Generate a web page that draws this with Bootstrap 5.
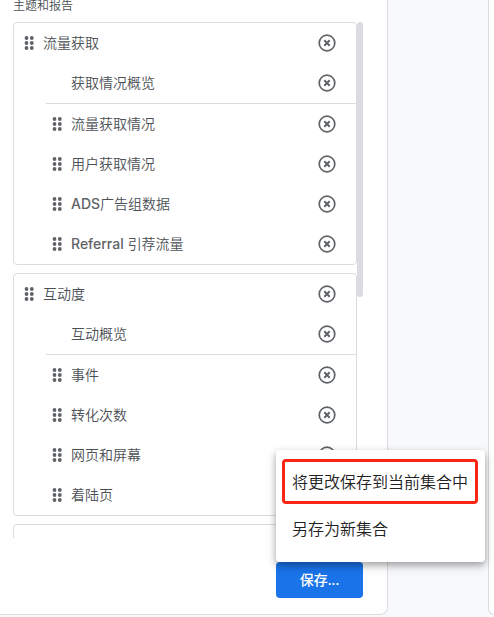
<!DOCTYPE html>
<html lang="zh-CN">
<head>
<meta charset="utf-8">
<meta name="viewport" content="width=device-width, initial-scale=1">
<title>主题和报告</title>
<link href="https://cdn.jsdelivr.net/npm/bootstrap@5.3.0/dist/css/bootstrap.min.css" rel="stylesheet">
<style>
body { background: #f8f9fb; color: #4c5055; font-family: Inter, "Noto Sans CJK SC", sans-serif; font-size: 14px; font-weight: 350; line-height: 20px; overflow: hidden; }
.workspace { gap: 100px; }
.editor { min-width: 0; padding: 0 24px 16px 13px; border: solid #dadce0; border-width: 0 1px 1px 0; border-bottom-right-radius: 8px; }
.preview { width: 6px; border: solid #dadce0; border-width: 0 0 1px 1px; border-bottom-left-radius: 8px; }
.section-label { font-size: 12px; line-height: 12px; font-weight: 350; margin-bottom: 10px; }
.topic-scroll { height: 516px; margin-bottom: 24px; }
.topic { border: 1px solid #dadce0; border-radius: 4px; background: #fff; }
.topic-row { height: 40px; padding: 0 19px 0 9px; }
.topic-items { margin: 0; padding: 0; margin-left: 32px; list-style: none; }
.topic-items .topic-row { padding-left: 5px; }
.topic-items .overview { padding-left: 25px; height: 41px; border-bottom: 1px solid #dadce0; }
.topic-title { font-size: 14px; line-height: 20px; font-weight: 350; }
.latin { font-weight: 500; color: #5f6368; }
.handle { width: 12px; height: 20px; fill: #5f6368; }
.remove { width: 20px; height: 20px; color: #5f6368; }
.remove svg { width: 20px; height: 20px; }
.thumb { width: 6px; height: 275px; background: #dadce0; border-radius: 3px; }
.btn-save { width: 87px; height: 36px; padding: 0; background: #1a73e8; color: #fff; border: 0; border-radius: 4px; font-family: Roboto, "Noto Sans CJK SC", sans-serif; font-size: 14px; font-weight: 500; }
.btn-save:hover, .btn-save.show { background: #1a73e8 !important; color: #fff !important; }
.save-menu { left: 0; bottom: 100%; width: 209px; min-width: 0; padding: 9px 6px 8px; border: 0; border-radius: 4px; box-shadow: 0 3px 6px rgba(0,0,0,.25), 0 4px 12px rgba(0,0,0,.16); }
.save-menu .dropdown-item { height: 46px; padding: 0 10px; color: #212121; font-size: 16px; font-weight: 350; line-height: 24px; }
.save-menu .highlighted { width: 196px; height: 45px; padding: 0 7px; border: 3px solid #fb2616; border-radius: 4px; margin-bottom: 2px; }
.save-menu { padding-bottom: 10px; }
</style>
</head>
<body>
<svg class="d-none" aria-hidden="true">
  <symbol id="dots" viewBox="0 0 12 20">
    <circle cx="3.5" cy="5" r="1.9"/><circle cx="8.8" cy="5" r="1.9"/>
    <circle cx="3.5" cy="10" r="1.9"/><circle cx="8.8" cy="10" r="1.9"/>
    <circle cx="3.5" cy="15" r="1.9"/><circle cx="8.8" cy="15" r="1.9"/>
  </symbol>
  <symbol id="cross" viewBox="0 0 20 20">
    <circle cx="10" cy="10" r="7.8" fill="none" stroke="currentColor" stroke-width="1.7"/>
    <path d="M7.3 7.3l5.4 5.4M12.7 7.3l-5.4 5.4" fill="none" stroke="currentColor" stroke-width="2"/>
  </symbol>
</svg>
<main class="workspace d-flex">
  <section class="editor flex-grow-1 bg-white">
    <h1 class="section-label">主题和报告</h1>
    <div class="topic-scroll d-flex overflow-hidden">
      <div class="flex-grow-1 d-flex flex-column gap-2">
        <article class="topic flex-shrink-0">
          <div class="topic-row d-flex align-items-center gap-2">
            <svg class="handle"><use href="#dots"/></svg><h2 class="topic-title m-0">流量获取</h2>
            <button type="button" class="remove btn border-0 p-0 d-flex ms-auto" aria-label="移除流量获取"><svg><use href="#cross"/></svg></button>
          </div>
          <ul class="topic-items">
            <li class="topic-row overview d-flex align-items-center"><span>获取情况概览</span><button type="button" class="remove btn border-0 p-0 d-flex ms-auto" aria-label="移除获取情况概览"><svg><use href="#cross"/></svg></button></li>
            <li class="topic-row d-flex align-items-center gap-2"><svg class="handle"><use href="#dots"/></svg><span>流量获取情况</span><button type="button" class="remove btn border-0 p-0 d-flex ms-auto" aria-label="移除流量获取情况"><svg><use href="#cross"/></svg></button></li>
            <li class="topic-row d-flex align-items-center gap-2"><svg class="handle"><use href="#dots"/></svg><span>用户获取情况</span><button type="button" class="remove btn border-0 p-0 d-flex ms-auto" aria-label="移除用户获取情况"><svg><use href="#cross"/></svg></button></li>
            <li class="topic-row d-flex align-items-center gap-2"><svg class="handle"><use href="#dots"/></svg><span><span class="latin">ADS</span>广告组数据</span><button type="button" class="remove btn border-0 p-0 d-flex ms-auto" aria-label="移除ADS广告组数据"><svg><use href="#cross"/></svg></button></li>
            <li class="topic-row d-flex align-items-center gap-2"><svg class="handle"><use href="#dots"/></svg><span><span class="latin">Referral</span> 引荐流量</span><button type="button" class="remove btn border-0 p-0 d-flex ms-auto" aria-label="移除Referral 引荐流量"><svg><use href="#cross"/></svg></button></li>
          </ul>
        </article>
        <article class="topic flex-shrink-0">
          <div class="topic-row d-flex align-items-center gap-2">
            <svg class="handle"><use href="#dots"/></svg><h2 class="topic-title m-0">互动度</h2>
            <button type="button" class="remove btn border-0 p-0 d-flex ms-auto" aria-label="移除互动度"><svg><use href="#cross"/></svg></button>
          </div>
          <ul class="topic-items">
            <li class="topic-row overview d-flex align-items-center"><span>互动概览</span><button type="button" class="remove btn border-0 p-0 d-flex ms-auto" aria-label="移除互动概览"><svg><use href="#cross"/></svg></button></li>
            <li class="topic-row d-flex align-items-center gap-2"><svg class="handle"><use href="#dots"/></svg><span>事件</span><button type="button" class="remove btn border-0 p-0 d-flex ms-auto" aria-label="移除事件"><svg><use href="#cross"/></svg></button></li>
            <li class="topic-row d-flex align-items-center gap-2"><svg class="handle"><use href="#dots"/></svg><span>转化次数</span><button type="button" class="remove btn border-0 p-0 d-flex ms-auto" aria-label="移除转化次数"><svg><use href="#cross"/></svg></button></li>
            <li class="topic-row d-flex align-items-center gap-2"><svg class="handle"><use href="#dots"/></svg><span>网页和屏幕</span><button type="button" class="remove btn border-0 p-0 d-flex ms-auto" aria-label="移除网页和屏幕"><svg><use href="#cross"/></svg></button></li>
            <li class="topic-row d-flex align-items-center gap-2"><svg class="handle"><use href="#dots"/></svg><span>着陆页</span><button type="button" class="remove btn border-0 p-0 d-flex ms-auto" aria-label="移除着陆页"><svg><use href="#cross"/></svg></button></li>
          </ul>
        </article>
        <article class="topic flex-shrink-0"><div class="topic-row"></div></article>
      </div>
      <div class="thumb flex-shrink-0"></div>
    </div>
    <div class="d-flex justify-content-end">
      <div class="dropup position-relative">
        <button type="button" class="btn btn-save d-block" aria-haspopup="true" aria-expanded="true">保存...</button>
        <div class="dropdown-menu save-menu show m-0">
          <button type="button" class="dropdown-item highlighted">将更改保存到当前集合中</button>
          <button type="button" class="dropdown-item">另存为新集合</button>
        </div>
      </div>
    </div>
  </section>
  <aside class="preview flex-shrink-0 bg-white"></aside>
</main>
<script src="https://cdn.jsdelivr.net/npm/bootstrap@5.3.0/dist/js/bootstrap.bundle.min.js"></script>
</body>
</html>
